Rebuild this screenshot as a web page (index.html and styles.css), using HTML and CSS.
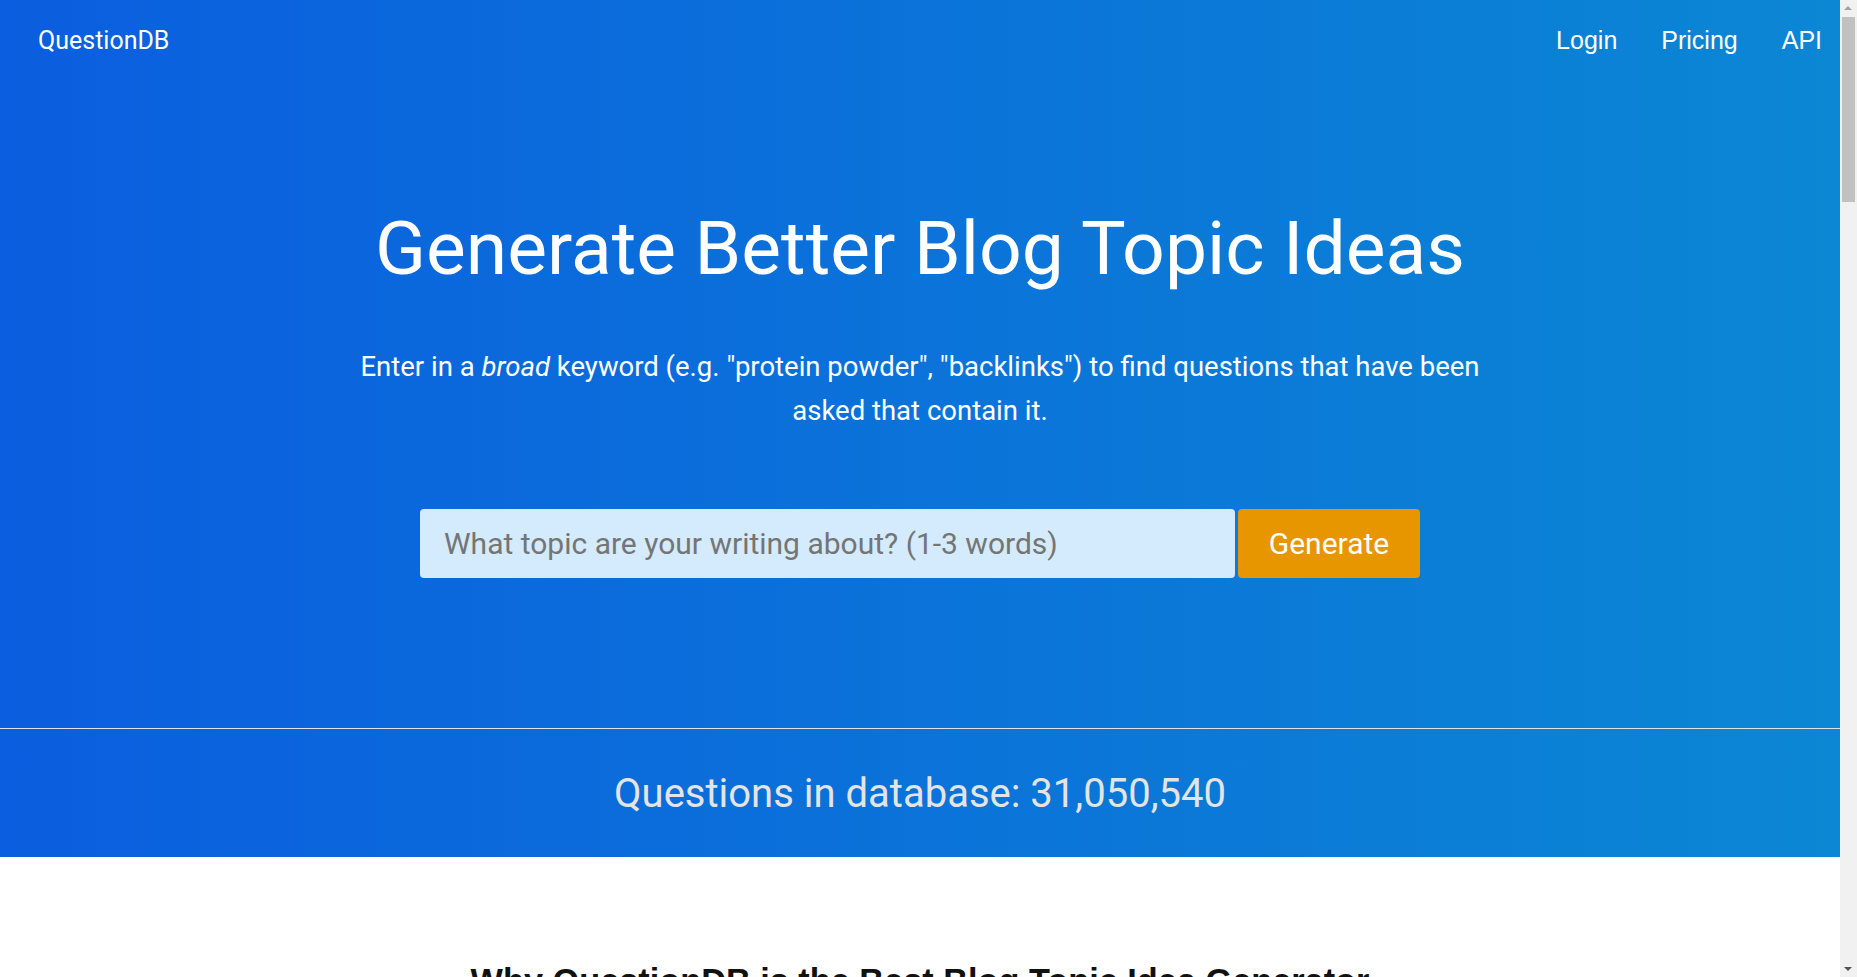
FILE: index.html
```html
<!DOCTYPE html>
<html lang="en">
<head>
    <meta charset="UTF-8">
    <meta name="viewport" content="width=device-width, initial-scale=1.0">
    <title>QuestionDB - Generate Better Blog Topic Ideas</title>
    <link rel="stylesheet" href="styles.css">
</head>
<body>
    <header class="hero">
        <nav class="nav">
            <a class="logo" href="#">QuestionDB</a>
            <div class="nav-links">
                <a href="#">Login</a>
                <a href="#">Pricing</a>
                <a href="#">API</a>
            </div>
        </nav>

        <div class="hero-content">
            <h1>Generate Better Blog Topic Ideas</h1>
            <p class="lead">Enter in a <em>broad</em> keyword (e.g. "protein powder", "backlinks") to find questions that have been asked that contain it.</p>

            <form class="search-form">
                <input type="text" name="q" placeholder="What topic are your writing about? (1-3 words)">
                <button type="submit">Generate</button>
            </form>
        </div>
    </header>

    <section class="stats">
        <p>Questions in database: 31,050,540</p>
    </section>

    <section class="why">
        <h2>Why QuestionDB is the Best Blog Topic Idea Generator</h2>
        <p>QuestionDB finds the questions people are actually asking about your topic, so you can write content that answers them.</p>
        <p>Every question links back to its source, which makes it easy to see the context and how often a topic comes up.</p>
    </section>

    <!-- window scrollbar, as it shows in the screenshot -->
    <div class="scrollbar" aria-hidden="true">
        <span class="arrow up"></span>
        <span class="thumb"></span>
        <span class="arrow down"></span>
    </div>
</body>
</html>
```

FILE: styles.css
```css
body {
    margin: 0 17px 0 0;
    font-family: Roboto, "Liberation Sans", sans-serif;
    color: #222;
    background-color: #fff;
}
a {
    text-decoration: none;
    color: inherit;
}
.hero {
    background: linear-gradient(90deg, #0b5edf, #0b87d4);
    color: #fff;
    border-bottom: 1px solid #e2e2e2;
}
.nav {
    display: flex;
    justify-content: space-between;
    align-items: center;
    height: 80px;
    padding: 0 18px 0 38px;
}
.logo {
    font-size: 25px;
}
.nav-links {
    display: flex;
    gap: 44px;
    font-family: "Liberation Sans", Arial, sans-serif;
    font-size: 25px;
}
.hero-content {
    padding: 123px 20px 150px;
    text-align: center;
}
.hero h1 {
    margin: 0;
    font-size: 75px;
    font-weight: 400;
    line-height: 90px;
    padding-bottom: 6px;
}
.lead {
    max-width: 1150px;
    margin: 46px auto 76px;
    font-size: 27.5px;
    line-height: 44px;
}
.search-form {
    display: flex;
    gap: 3px;
    max-width: 1000px;
    height: 69px;
    margin: 0 auto;
}
.search-form input {
    flex: 1;
    min-width: 0;
    padding: 0 24px;
    border: none;
    border-radius: 4px;
    background-color: #d4eafd;
    font-family: inherit;
    font-size: 30px;
    color: #333;
}
.search-form input::placeholder {
    color: #757575;
}
.search-form button {
    width: 182px;
    border: none;
    border-radius: 4px;
    background-color: #e89600;
    color: #fff;
    font-family: inherit;
    font-size: 30px;
    cursor: pointer;
}
.stats {
    display: flex;
    align-items: center;
    justify-content: center;
    height: 128px;
    background: linear-gradient(90deg, #0b5edf, #0b87d4);
}
.stats p {
    margin: 0;
    font-size: 40px;
    color: #e4e4e4;
}
.why {
    max-width: 1000px;
    min-height: 4000px;
    margin: 0 auto;
    padding: 104px 20px 0;
}
.why h2 {
    margin: 0 0 30px;
    text-align: center;
    font-family: "Liberation Sans", Arial, sans-serif;
    font-size: 34.3px;
    line-height: 1.2;
    color: #111;
}
.why p {
    font-size: 20px;
    line-height: 1.6;
}
.scrollbar {
    position: fixed;
    top: 0;
    right: 0;
    width: 17px;
    height: 100vh;
    background-color: #f1f1f1;
}
.thumb {
    position: absolute;
    top: 17px;
    left: 2px;
    width: 13px;
    height: 185px;
    background-color: #c1c1c1;
}
.arrow {
    position: absolute;
    left: 4px;
    width: 0;
    height: 0;
    border-left: 4px solid transparent;
    border-right: 4px solid transparent;
}
.arrow.up {
    top: 6px;
    border-bottom: 4px solid #a3a3a3;
}
.arrow.down {
    bottom: 6px;
    border-top: 4px solid #505050;
}
```
